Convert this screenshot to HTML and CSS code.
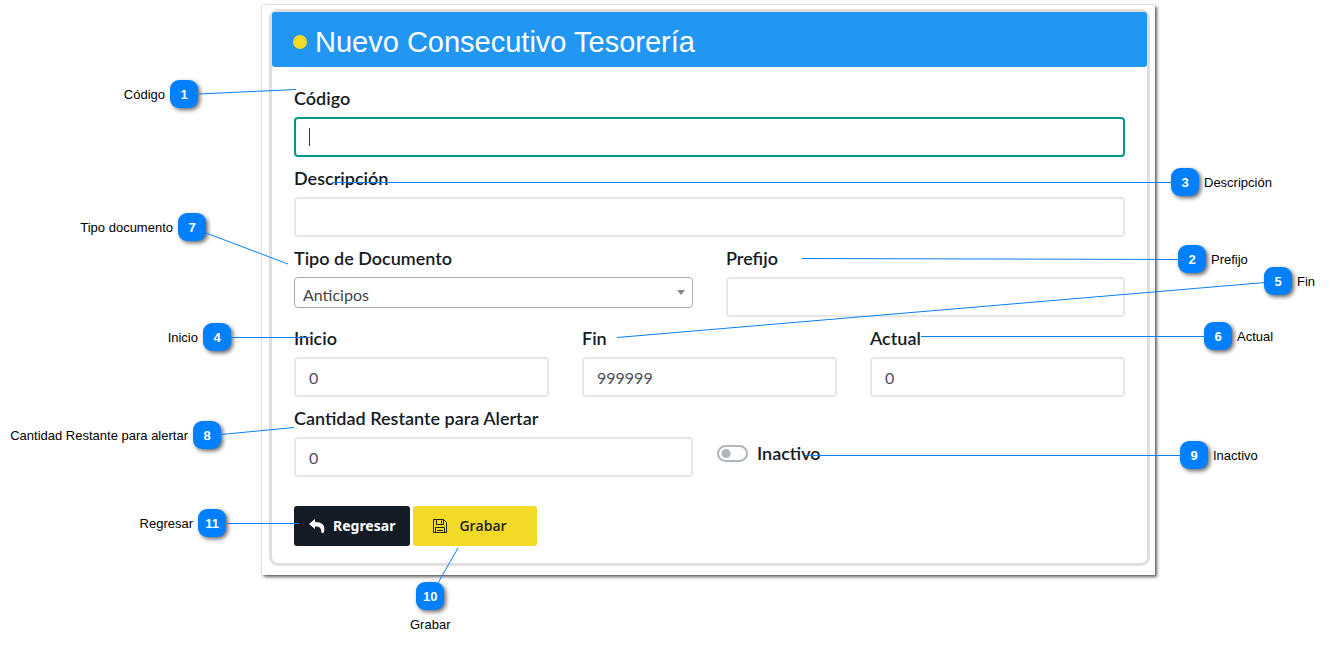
FILE: index.html
```html
<!DOCTYPE html>
<html lang="es">
<head>
<meta charset="utf-8">
<title>Nuevo Consecutivo Tesorería</title>
<meta name="viewport" content="width=device-width, initial-scale=1">
<link rel="stylesheet" href="styles.css">
</head>
<body>
<main class="stage">
  <div class="sheet">
    <section class="card">
      <header class="card-header">
        <span class="dot"></span>
        <h1 class="title">Nuevo Consecutivo Tesorería</h1>
      </header>
      <form class="form">
        <div class="field">
          <label class="label" for="codigo">Código</label>
          <input class="input input-active" id="codigo" type="text">
        </div>
        <div class="field">
          <label class="label" for="descripcion">Descripción</label>
          <input class="input" id="descripcion" type="text">
        </div>
        <div class="row halves">
          <div class="field">
            <label class="label" for="tipo">Tipo de Documento</label>
            <div class="select-wrap">
              <select class="select" id="tipo"><option>Anticipos</option></select>
              <svg class="arrow" viewBox="0 0 8 5" aria-hidden="true"><path d="M0 0h8L4 5z"/></svg>
            </div>
          </div>
          <div class="field">
            <label class="label" for="prefijo">Prefijo</label>
            <input class="input" id="prefijo" type="text">
          </div>
        </div>
        <div class="row thirds">
          <div class="field">
            <label class="label" for="inicio">Inicio</label>
            <input class="input" id="inicio" type="text" value="0">
          </div>
          <div class="field">
            <label class="label" for="fin">Fin</label>
            <input class="input" id="fin" type="text" value="999999">
          </div>
          <div class="field">
            <label class="label" for="actual">Actual</label>
            <input class="input" id="actual" type="text" value="0">
          </div>
        </div>
        <div class="row alert-row">
          <div class="field">
            <label class="label" for="cantidad">Cantidad Restante para Alertar</label>
            <input class="input" id="cantidad" type="text" value="0">
          </div>
          <div class="toggle">
            <input class="switch" id="inactivo" type="checkbox" role="switch">
            <label class="label" for="inactivo">Inactivo</label>
          </div>
        </div>
        <div class="actions">
          <button class="btn btn-dark" type="button">
            <svg class="icon-reply" viewBox="0 0 16 14" aria-hidden="true"><path d="M6 0 0 5l6 5V7.500c4-.2 6.500 1 6.500 6.500h2c2-5 1-11-8.500-11z"/></svg>
            Regresar
          </button>
          <button class="btn btn-yellow" type="button">
            <svg class="icon-save" viewBox="0 0 14 14" aria-hidden="true"><path d="M.5.5h10l3 3v10H.5zM3.500.5v5h7v-5M8.500 1.500v3M2.500 13.500v-5h9v5M4 11.500h6"/></svg>
            Grabar
          </button>
        </div>
      </form>
    </section>

    <div class="note note-left n1"><span>Código</span><b class="badge">1</b></div>
    <div class="note note-left n7"><span>Tipo documento</span><b class="badge">7</b></div>
    <div class="note note-left n4"><span>Inicio</span><b class="badge">4</b></div>
    <div class="note note-left n8"><span>Cantidad Restante para alertar</span><b class="badge">8</b></div>
    <div class="note note-left n11"><span>Regresar</span><b class="badge">11</b></div>
    <div class="note n3"><b class="badge">3</b><span>Descripción</span></div>
    <div class="note n2"><b class="badge">2</b><span>Prefijo</span></div>
    <div class="note n5"><b class="badge">5</b><span>Fin</span></div>
    <div class="note n6"><b class="badge">6</b><span>Actual</span></div>
    <div class="note n9"><b class="badge">9</b><span>Inactivo</span></div>
    <div class="note note-below n10"><b class="badge">10</b><span>Grabar</span></div>
  </div>

  <svg class="leaders" aria-hidden="true">
    <path d="M198 94 296 89.500M206 233l82 31M231 337.500h79M221 434.500l73-7M226 523.500h73M438 583l20-35M332 182.500h840M802 258.500l377 1M617 337.500l648-55M921 336.500h284M805 455.500h376"/>
  </svg>
</main>
</body>
</html>
```
FILE: styles.css
```css
* { box-sizing: border-box; }

body {
  margin: 0;
  background: #fff;
  color: #141b24;
  font-family: Lato, "Liberation Sans", sans-serif;
}

.stage {
  position: relative;
  padding: 5px 176px 72px 262px;
}

.sheet {
  position: relative;
  padding: 4px 5px 9px 7px;
  box-shadow: 2px 2px 3px rgba(0, 0, 0, .6), 0 0 2px rgba(0, 0, 0, .3);
}

.card {
  border: 3px solid #dfdfdf;
  border-radius: 9px;
}

.card-header {
  display: flex;
  align-items: center;
  gap: 8px;
  height: 55px;
  padding: 4px 21px 0;
  border-radius: 3px;
  background: #2196f3;
}

.dot {
  width: 14px;
  height: 14px;
  border-radius: 50%;
  background: #f2da26;
}

.title {
  margin: 0;
  color: #fff;
  font: 400 29px/32px "Liberation Sans", Arial, sans-serif;
}

.form {
  display: flex;
  flex-direction: column;
  gap: 9px;
  padding: 19px 22px 17px;
}

.row {
  display: grid;
  gap: 33px;
}

.halves { grid-template-columns: 1fr 1fr; }
.thirds { grid-template-columns: 1fr 1fr 1fr; }
.alert-row { grid-template-columns: 399fr 408fr; gap: 24px; }

.field {
  display: flex;
  flex-direction: column;
  gap: 7px;
  min-width: 0;
}

.label {
  font-size: 18px;
  font-weight: 600;
  line-height: 24px;
}

.input {
  width: 100%;
  height: 40px;
  padding: 0 13px;
  border: 2px solid #e4e9e8;
  border-radius: 4px;
  outline: 0;
  background: #fff;
  color: #495057;
  font: 400 16px/24px Lato, sans-serif;
}

.input-active {
  border-color: #009688;
  background: linear-gradient(#333, #333) 13px center / 1px 18px no-repeat #fff;
}

.select-wrap { position: relative; }

.select {
  display: block;
  width: 100%;
  height: 31px;
  padding: 4px 8px 0;
  border: 1px solid #aaa;
  border-radius: 4px;
  appearance: none;
  background: #fff;
  color: #444;
  font: 400 16px/24px Lato, sans-serif;
}

.arrow {
  position: absolute;
  top: 13px;
  right: 8px;
  width: 8px;
  height: 5px;
  fill: #888;
}

.toggle {
  display: flex;
  align-items: center;
  gap: 9px;
  padding-top: 24px;
  padding-bottom: 1px;
}

.switch {
  width: 31px;
  height: 17px;
  margin: 0;
  border: 2px solid #adb5bd;
  border-radius: 9px;
  appearance: none;
  background: radial-gradient(circle at 7px 50%, #adb5bd 4px, #fff 5px);
}

.switch:checked {
  background: radial-gradient(circle at 20px 50%, #adb5bd 4px, #fff 5px);
}

.actions {
  display: flex;
  gap: 3px;
  padding-top: 20px;
}

.btn {
  display: flex;
  align-items: center;
  height: 40px;
  border: 0;
  border-radius: 3px;
  font: 700 14px/24px "Noto Sans", sans-serif;
}

.btn-dark {
  gap: 8px;
  padding: 0 15px;
  background: #141b26;
  color: #fff;
}

.btn-yellow {
  gap: 12px;
  padding: 0 30px 0 20px;
  background: #f2da26;
  color: #222;
  font-family: "Open Sans", "Noto Sans", sans-serif;
  font-weight: 600;
}

.icon-reply {
  width: 16px;
  height: 14px;
  fill: #fff;
}

.icon-save {
  width: 14px;
  height: 14px;
  fill: none;
  stroke: #222;
}

.leaders {
  position: absolute;
  inset: 0;
  width: 100%;
  height: 100%;
  fill: none;
  stroke: #0a80ff;
  pointer-events: none;
}

/* Numbered notes hang off the edges of the sheet. */
.note {
  position: absolute;
  display: flex;
  align-items: center;
  gap: 5px;
  color: #000;
  font: 400 13px/16px "Liberation Sans", Arial, sans-serif;
  white-space: nowrap;
}

.note span { padding-top: 2px; }

.note-below { flex-direction: column; }

.badge {
  width: 28px;
  height: 28px;
  border-radius: 9px;
  background: #0080ff;
  box-shadow: 2px 2px 4px rgba(0, 0, 0, .6);
  color: #fff;
  line-height: 30px;
  text-align: center;
}

.n1 { top: 75px; right: calc(100% + 64px); }
.n7 { top: 208px; right: calc(100% + 56px); }
.n4 { top: 318px; right: calc(100% + 31px); }
.n8 { top: 416px; right: calc(100% + 41px); }
.n11 { top: 504px; right: calc(100% + 36px); }
.n3 { top: 163px; left: calc(100% + 16px); }
.n2 { top: 240px; left: calc(100% + 23px); }
.n5 { top: 262px; left: calc(100% + 109px); }
.n6 { top: 317px; left: calc(100% + 49px); }
.n9 { top: 436px; left: calc(100% + 25px); }
.n10 { top: 577px; left: 148px; }
```
